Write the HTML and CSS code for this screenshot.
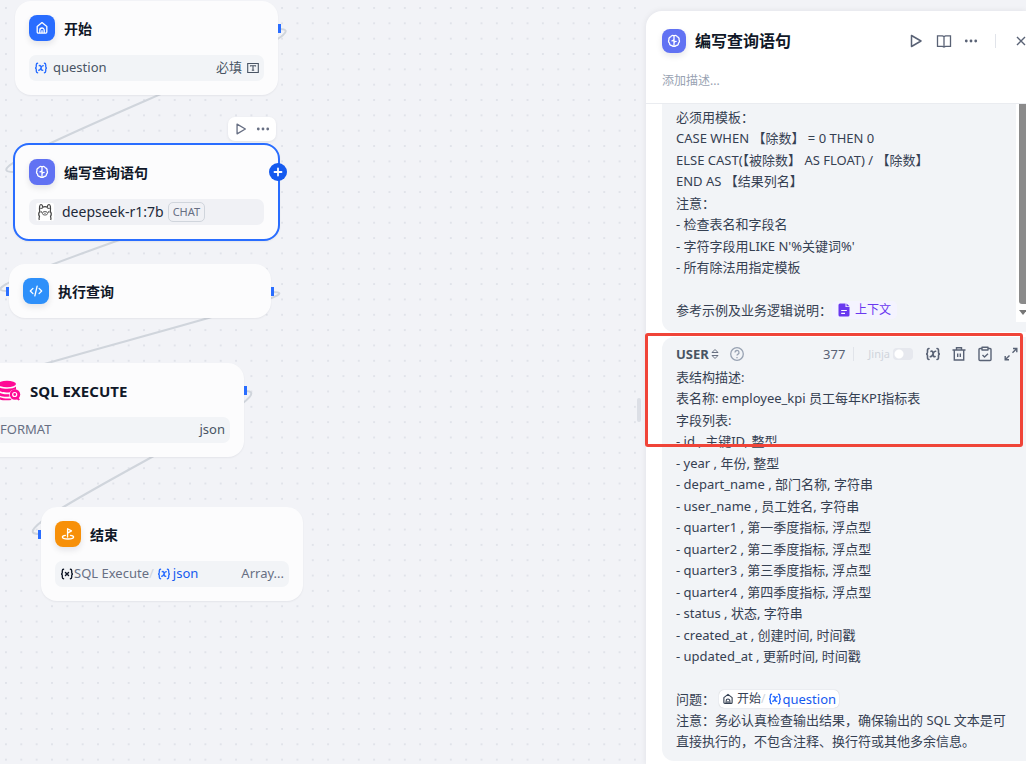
FILE: index.html
```html
<!DOCTYPE html>
<html lang="zh-CN">
<head>
    <meta charset="UTF-8">
    <meta name="viewport" content="width=device-width, initial-scale=1.0">
    <title>Workflow</title>
    <link rel="stylesheet" href="styles.css">
</head>
<body>
    <!-- shared icons -->
    <svg class="sprite" aria-hidden="true">
        <symbol id="i-home" viewBox="0 0 16 16"><path d="M2.500 6.200 8 1.800l5.500 4.400V12.500a1.300 1.300 0 0 1-1.300 1.300H3.800a1.300 1.300 0 0 1-1.300-1.300zM5.500 13.500v-3a2.500 2.500 0 0 1 5 0v3M8 10.500v3" fill="none" stroke="currentColor" stroke-width="1.500" stroke-linejoin="round"/></symbol>
        <symbol id="i-llm" viewBox="0 0 16 16"><path d="M8 1.800v12.400M8 2.200C6.600 1.200 4.600 1.700 4.200 3.300 2.500 3.700 1.700 5.400 2.300 6.800 1.300 8 1.700 9.800 2.900 10.500c0 1.700 1.300 2.700 2.600 2.600.6 1 1.800 1.200 2.500.6.700.6 1.900.4 2.500-.6 1.300.1 2.600-.9 2.600-2.600 1.200-.7 1.600-2.500.6-3.700.6-1.400-.2-3.100-1.900-3.500C11.400 1.700 9.400 1.200 8 2.200M5.600 7.800c1.400 0 2.400-1 2.400-2M10.400 8.500C9 8.500 8 9.400 8 10.500" fill="none" stroke="currentColor" stroke-width="1.500" stroke-linecap="round" stroke-linejoin="round"/></symbol>
        <symbol id="i-code" viewBox="0 0 16 16"><path d="M4.500 5 1.500 8l3 3M11.500 5l3 3-3 3M9.300 2.500 6.700 13.500" fill="none" stroke="currentColor" stroke-width="1.500" stroke-linecap="round" stroke-linejoin="round"/></symbol>
        <symbol id="i-end" viewBox="0 0 16 16"><path d="M7.500 11.500V2l4.500 2.500-4.500 2.500M5 9.500c-2 .3-3.400 1-3.400 1.900 0 1.300 2.800 2.300 6.400 2.300s6.400-1 6.400-2.300c0-.9-1.400-1.600-3.600-1.900" fill="none" stroke="currentColor" stroke-width="1.500" stroke-linecap="round" stroke-linejoin="round"/></symbol>
        <symbol id="i-var" viewBox="0 0 16 14"><path d="M4 1.500C2.500 1.500 2.500 2.300 2.500 3.500v1.700C2.500 6.300 2 7 1 7c1 0 1.500.7 1.500 1.800v1.700c0 1.200 0 2 1.500 2M12 1.500c1.500 0 1.500.8 1.500 2v1.700C13.500 6.300 14 7 15 7c-1 0-1.500.7-1.500 1.800v1.700c0 1.200 0 2-1.500 2M6 4.300c1.600-.6 1.800.8 2.100 2.700.3 1.900.5 3.200 2 2.600M10.600 4.300C9 4 8.500 5.700 8 7 7.400 8.500 7 10 5.300 9.600" fill="none" stroke="currentColor" stroke-width="1.600" stroke-linecap="round"/></symbol>
        <symbol id="i-env" viewBox="0 0 16 14"><path d="M4 1.500C2.500 1.500 2.500 2.300 2.500 3.500v1.700C2.500 6.300 2 7 1 7c1 0 1.500.7 1.500 1.800v1.700c0 1.200 0 2 1.500 2M12 1.500c1.500 0 1.500.8 1.500 2v1.700C13.500 6.300 14 7 15 7c-1 0-1.500.7-1.500 1.800v1.700c0 1.200 0 2-1.500 2M6.200 5.200l3.600 3.600M9.800 5.200 6.200 8.800" fill="none" stroke="currentColor" stroke-width="1.600" stroke-linecap="round"/></symbol>
        <symbol id="i-play" viewBox="0 0 16 16"><path d="M3.500 2.500v11L13 8z" fill="none" stroke="currentColor" stroke-width="1.500" stroke-linejoin="round"/></symbol>
        <symbol id="i-more" viewBox="0 0 16 16"><circle cx="2.600" cy="8" r="1.600"/><circle cx="8" cy="8" r="1.600"/><circle cx="13.400" cy="8" r="1.600"/></symbol>
    </svg>

    <div class="app">
        <main class="canvas">
            <svg class="edges" aria-hidden="true">
                <defs>
                    <pattern id="dots" x="-1.700" y="0.300" width="15.340" height="15.340" patternUnits="userSpaceOnUse">
                        <circle cx="7.670" cy="7.670" r="1" fill="#dcdfe6"/>
                    </pattern>
                </defs>
                <rect width="100%" height="100%" fill="url(#dots)"/>
                <g fill="none" stroke="#d0d5dc" stroke-width="2">
                    <path d="M279 29C341 29-49 172 13 172"/>
                    <path d="M279 172C341 172-55 291 7 291"/>
                    <path d="M273 292C335 292-82 390-20 390"/>
                    <path d="M245 391C299 391-15 534 39 534"/>
                </g>
            </svg>

            <section class="node node-start">
                <header class="node-head">
                    <span class="badge blue"><svg><use href="#i-home"/></svg></span>
                    <h2>开始</h2>
                </header>
                <div class="field">
                    <svg class="var-icon"><use href="#i-var"/></svg>
                    <span class="field-name">question</span>
                    <span>必填</span>
                    <svg class="type-icon" viewBox="0 0 12 12"><path d="M.7 1.500h10.600v9H.7zM3.500 4.600V3.800h5v.8M6 3.800v4.400M4.800 8.200h2.400" fill="none" stroke="currentColor" stroke-width="1.100"/></svg>
                </div>
                <i class="handle right"></i>
            </section>

            <section class="node node-llm selected">
                <header class="node-head">
                    <span class="badge indigo"><svg><use href="#i-llm"/></svg></span>
                    <h2>编写查询语句</h2>
                </header>
                <div class="field model">
                    <svg class="llama" viewBox="0 0 18 18"><rect width="18" height="18" rx="2" fill="#fff"/><path d="M3.300 17c-.5-1.300-.3-2.400.2-3.400-1-1.700-.9-3.900.2-5.300C3.200 5 3.500 1.500 4.900 1.500c1 0 1.700 1.500 1.900 2.800 1.300-.7 3.100-.7 4.400 0 .2-1.300.9-2.800 1.900-2.800 1.400 0 1.700 3.500 1.200 6.800 1.100 1.400 1.200 3.600.2 5.300.5 1 .7 2.100.2 3.400" fill="none" stroke="#444" stroke-width="1.200"/><path d="M4.200 5.300h2.400M11.400 5.300h2.400" stroke="#444"/><ellipse cx="9" cy="10.300" rx="2.600" ry="1.800" fill="none" stroke="#555" stroke-width=".9"/><circle cx="5.200" cy="9" r=".8" fill="#333"/><circle cx="12.800" cy="9" r=".8" fill="#333"/><path d="M9 9.800v1" stroke="#333"/></svg>
                    <span>deepseek-r1:7b</span>
                    <span class="tag">CHAT</span>
                </div>
                <button class="add" aria-label="添加节点"><svg viewBox="0 0 10 10"><path d="M5 1.500v7M1.500 5h7" stroke="#fff" stroke-width="1.800" stroke-linecap="round"/></svg></button>
            </section>

            <div class="node-tools">
                <button aria-label="运行"><svg><use href="#i-play"/></svg></button>
                <button aria-label="更多"><svg><use href="#i-more"/></svg></button>
            </div>

            <section class="node node-code">
                <header class="node-head">
                    <span class="badge sky"><svg><use href="#i-code"/></svg></span>
                    <h2>执行查询</h2>
                </header>
                <i class="handle left"></i>
                <i class="handle right"></i>
            </section>

            <section class="node node-sql">
                <header class="node-head">
                    <span class="badge"><svg class="db-icon" viewBox="0 0 26 26"><g fill="#ff0a95"><ellipse cx="12" cy="7" rx="9" ry="3.300"/><path d="M3 9.500c3 3 15 3 18 0v3.200c-2-.6-5 0-6 2.600-5 .7-10-.2-12-2.300zM3 14.800c2.500 2.200 7 2.800 11 2.400l.7 2.300C9 20.300 4.500 19 3 17.300zM3 19.200c3 2 8 2.800 12.500 2.200l1 1.500C11 24 4 23 3 21z"/><circle cx="20" cy="17.500" r="5.200"/><path d="m22.500 20 2.500 2.500-1.500 1-2.500-2z"/></g><circle cx="19.700" cy="17.500" r="2" fill="none" stroke="#fff" stroke-width="1.200"/></svg></span>
                    <h2>SQL EXECUTE</h2>
                </header>
                <div class="field">
                    <span class="field-name muted">FORMAT</span>
                    <span>json</span>
                </div>
                <i class="handle right"></i>
            </section>

            <section class="node node-end">
                <header class="node-head">
                    <span class="badge orange"><svg><use href="#i-end"/></svg></span>
                    <h2>结束</h2>
                </header>
                <div class="field output">
                    <svg class="env-icon"><use href="#i-env"/></svg>
                    <span class="muted">SQL Execute</span>
                    <span class="slash">/</span>
                    <svg class="var-icon"><use href="#i-var"/></svg>
                    <span class="var-name">json</span>
                    <span class="field-type">Array...</span>
                </div>
                <i class="handle left"></i>
            </section>
            <i class="resizer"></i>
        </main>

        <aside class="panel">
            <header class="panel-head">
                <div class="panel-title">
                    <span class="badge small indigo"><svg><use href="#i-llm"/></svg></span>
                    <h1>编写查询语句</h1>
                    <div class="panel-actions">
                        <button aria-label="运行"><svg><use href="#i-play"/></svg></button>
                        <button aria-label="文档"><svg viewBox="0 0 16 16"><path d="M1.500 2.800h5L8 3.500l1.500-.7h5v10.500h-5L8 14l-1.500-.7h-5zM8 3.500V14" fill="none" stroke="currentColor" stroke-width="1.300"/></svg></button>
                        <button aria-label="更多"><svg class="more"><use href="#i-more"/></svg></button>
                        <i class="divider"></i>
                        <button aria-label="关闭"><svg viewBox="0 0 16 16"><path d="m4 4 8 8M12 4l-8 8" stroke="currentColor" stroke-width="1.400"/></svg></button>
                    </div>
                </div>
                <input class="description" type="text" placeholder="添加描述..." aria-label="添加描述">
            </header>

            <div class="prompts">
                <section class="prompt system">
                    <div class="prompt-text">
                        <p>必须用模板：</p>
                        <p>CASE WHEN 【除数】 = 0 THEN 0</p>
                        <p>ELSE CAST(【被除数】 AS FLOAT) / 【除数】</p>
                        <p>END AS 【结果列名】</p>
                        <p>注意：</p>
                        <p>- 检查表名和字段名</p>
                        <p>- 字符字段用LIKE N'%关键词%'</p>
                        <p>- 所有除法用指定模板</p>
                        <p><br></p>
                        <p>参考示例及业务逻辑说明：<span class="chip context"><svg viewBox="0 0 12 14"><path d="M2 .5h5.500v3.500H11.500V12a1.500 1.500 0 0 1-1.500 1.500H2A1.500 1.500 0 0 1 .5 12V2A1.500 1.500 0 0 1 2 .5zM8.500.5l3 2.700h-3z" fill="currentColor"/><path d="M3.200 7.500h5.600M3.200 10.300h3.800" stroke="#fff" stroke-width="1.200"/></svg>上下文</span></p>
                    </div>
                    <div class="scrollbar"><i></i><svg viewBox="0 0 8 5"><path d="M0 0h8L4 5z" fill="#777"/></svg></div>
                </section>

                <section class="prompt">
                    <header class="prompt-head">
                        <label class="role">
                            <select aria-label="角色"><option>USER</option></select>
                            <svg viewBox="0 0 8 12"><path d="M1 4.500 4 1.500l3 3zM1 7.500l3 3 3-3z" fill="none" stroke="currentColor" stroke-width=".9"/></svg>
                        </label>
                        <svg class="help" viewBox="0 0 16 16"><path d="M6 6.500a2 2 0 1 1 2.800 1.800c-.6.300-.8.600-.8 1.200M8 11v1.300" fill="none" stroke="currentColor" stroke-width="1.300"/><circle cx="8" cy="8" r="6.300" fill="none" stroke="currentColor" stroke-width="1.300"/></svg>
                        <span class="count">377</span>
                        <i class="divider"></i>
                        <label class="jinja">Jinja<input type="checkbox"></label>
                        <button aria-label="插入变量"><svg><use href="#i-var"/></svg></button>
                        <button aria-label="删除"><svg viewBox="0 0 16 16"><path d="M1.500 4h13M3.300 4v10h9.400V4M5.500 4V1.800h5V4M6.700 7.500v3.500M9.300 7.500v3.500" fill="none" stroke="currentColor" stroke-width="1.400"/></svg></button>
                        <button aria-label="复制"><svg viewBox="0 0 16 16"><path d="M5 2.500H3a1 1 0 0 0-1 1v10a1 1 0 0 0 1 1h10a1 1 0 0 0 1-1v-10a1 1 0 0 0-1-1h-2M5 1.200h6v2.800H5zM5.500 9l2 2L11 7.800" fill="none" stroke="currentColor" stroke-width="1.400" stroke-linejoin="round"/></svg></button>
                        <button aria-label="展开"><svg viewBox="0 0 16 16"><path d="M10 2.500h3.800v3.800M13.800 2.500 9.500 6.700M6 13.800H2.200V10M2.200 13.800l4.300-4.300" fill="none" stroke="currentColor" stroke-width="1.400"/></svg></button>
                    </header>
                    <div class="prompt-text">
                        <p>表结构描述:</p>
                        <p>表名称: employee_kpi 员工每年KPI指标表</p>
                        <p>字段列表:</p>
                        <p>- id , 主键ID, 整型</p>
                        <p>- year , 年份, 整型</p>
                        <p>- depart_name , 部门名称, 字符串</p>
                        <p>- user_name , 员工姓名, 字符串</p>
                        <p>- quarter1 , 第一季度指标, 浮点型</p>
                        <p>- quarter2 , 第二季度指标, 浮点型</p>
                        <p>- quarter3 , 第三季度指标, 浮点型</p>
                        <p>- quarter4 , 第四季度指标, 浮点型</p>
                        <p>- status , 状态, 字符串</p>
                        <p>- created_at , 创建时间, 时间戳</p>
                        <p>- updated_at , 更新时间, 时间戳</p>
                        <p><br></p>
                        <p>问题：<span class="chip variable"><svg class="home"><use href="#i-home"/></svg>开始<span class="slash">/</span><svg class="var-icon"><use href="#i-var"/></svg><span class="var-name">question</span></span></p>
                        <p>注意：务必认真检查输出结果，确保输出的 SQL 文本是可直接执行的，不包含注释、换行符或其他多余信息。</p>
                    </div>
                    <div class="highlight"></div>
                </section>
            </div>
        </aside>
    </div>
</body>
</html>
```
FILE: styles.css
```css
* {
    margin: 0;
    padding: 0;
    box-sizing: border-box;
}

body {
    background-color: #f2f3f7;
    color: #354052;
    font-family: "Noto Sans", "Noto Sans CJK SC", sans-serif;
    font-size: 13px;
    overflow: hidden;
}

button, input, select {
    font: inherit;
    color: inherit;
    border: none;
    background: none;
}

button {
    display: flex;
    align-items: center;
    justify-content: center;
    cursor: pointer;
}

svg {
    flex: none;
    fill: currentColor;
}

.sprite {
    position: absolute;
    width: 0;
    height: 0;
}

.app {
    display: flex;
    height: 100vh;
}

/* canvas */
.canvas {
    position: relative;
    flex: 1;
}

.edges {
    position: absolute;
    width: 100%;
    height: 100%;
}

.node {
    position: absolute;
    width: 263px;
    padding: 14px;
    border-radius: 16px;
    background-color: #fcfcfd;
    box-shadow: 0 1px 2px rgba(16, 24, 40, 0.06);
}

.node-start { left: 15px; top: 1px; }
.node-llm { left: 13px; top: 143px; }
.node-code { left: 9px; top: 264px; }
.node-sql { left: -19px; top: 363px; }
.node-end { left: 41px; top: 507px; }

.node-code, .node-end {
    width: 262px;
}

.selected {
    width: 267px;
    border: 2px solid #296dff;
}

.node-head {
    display: flex;
    align-items: center;
    gap: 9px;
    height: 26px;
}

.node-head h2 {
    padding-top: 1px;
    color: #101828;
    font-size: 14px;
    line-height: 20px;
}

.node-sql h2 {
    font-size: 15px;
}

.badge {
    display: flex;
    align-items: center;
    justify-content: center;
    width: 26px;
    height: 26px;
    border-radius: 8px;
    color: white;
}

.badge svg {
    width: 14px;
    height: 14px;
}

.badge .db-icon {
    width: 26px;
    height: 26px;
}

.small {
    width: 24px;
    height: 24px;
}

.blue { background-color: #296dff; }
.indigo { background-color: #6172f3; }
.sky { background-color: #2e90fa; }
.orange { background-color: #f79009; }

.blue, .indigo, .sky, .orange {
    box-shadow: 0 3px 6px rgba(16, 24, 40, 0.1);
}

.field {
    display: flex;
    align-items: center;
    height: 26px;
    margin-top: 14px;
    padding: 0 5px;
    gap: 5px;
    border-radius: 7px;
    background-color: #f2f4f7;
    color: #495464;
    line-height: 18px;
}

.field span {
    height: 20px;
}

.field-name {
    flex: 1;
}

.muted {
    color: #676f83;
}

.field .type-icon {
    width: 12px;
    height: 12px;
}

.var-icon, .env-icon {
    width: 14px;
    height: 12px;
    color: #296dff;
}

.env-icon {
    color: #101828;
}

.model {
    gap: 4px;
    color: #1d2939;
    font-size: 14px;
    line-height: 20px;
    background-color: #f0f1f5;
}

.llama {
    width: 18px;
    height: 18px;
    margin: 0 4px 0 2px;
}

.model .tag {
    padding: 0 4px;
    border: 1px solid #d0d5dc;
    border-radius: 5px;
    color: #676f83;
    font-size: 11px;
    line-height: 18px;
}

.output {
    gap: 0;
}

.slash {
    color: #d0d5dc;
    margin-right: 3px;
}

.var-name {
    margin-left: 2px;
    color: #155aef;
}

.field-type {
    margin-left: auto;
    color: #676f83;
}

.handle {
    position: absolute;
    top: 23px;
    width: 3px;
    height: 9px;
    background-color: #296dff;
}

.handle.left { left: -3px; }
.handle.right { right: -3px; }

.add {
    position: absolute;
    top: 18px;
    right: -9px;
    width: 18px;
    height: 18px;
    border-radius: 50%;
    background-color: #155aef;
}

.add svg {
    width: 10px;
    height: 10px;
}

.node-tools {
    position: absolute;
    left: 228px;
    top: 117px;
    display: flex;
    align-items: center;
    gap: 8px;
    padding: 5px 6px;
    border-radius: 7px;
    background-color: white;
    color: #676f83;
    box-shadow: 0 1px 3px rgba(16, 24, 40, 0.08);
}

.node-tools svg {
    width: 14px;
    height: 14px;
}

.resizer {
    position: absolute;
    top: 398px;
    right: 5px;
    width: 4px;
    height: 24px;
    border-radius: 2px;
    background-color: #dcdfe6;
}

/* side panel */
.panel {
    flex: 0 0 380px;
    margin-top: 11px;
    border-top-left-radius: 16px;
    background-color: white;
    box-shadow: 0 0 6px rgba(16, 24, 40, 0.08);
}

.panel-head {
    padding: 18px 0 13px 16px;
    border-bottom: 1px solid #eaecf0;
}

.panel-title {
    display: flex;
    align-items: center;
    gap: 9px;
}

.panel-title h1 {
    color: #101828;
    font-size: 16px;
    line-height: 24px;
}

.panel-actions {
    display: flex;
    align-items: center;
    gap: 12px;
    margin-left: auto;
    margin-right: -3px;
    color: #596275;
}

.panel-actions svg {
    width: 16px;
    height: 16px;
}

.panel-actions .more {
    width: 14px;
}

.divider {
    width: 1px;
    height: 14px;
    background-color: #e1e4ea;
}

.panel-actions .divider {
    margin: 0 5px;
}

.description {
    display: block;
    width: 100%;
    height: 20px;
    margin-top: 17px;
    font-size: 12px;
}

.description::placeholder {
    color: #98a2b2;
}

.prompts {
    display: flex;
    flex-direction: column;
    gap: 5px;
    padding-left: 16px;
}

.prompt {
    position: relative;
    padding: 0 14px 9px;
    border-radius: 12px 0 0 12px;
    background-color: #f2f4f7;
}

.system {
    padding-top: 2px;
    padding-bottom: 11px;
    border-top-left-radius: 0;
}

.prompt-text p {
    line-height: 21px;
}

.prompt-text p:nth-child(odd) {
    line-height: 22px;
}

.prompt-text p:last-child {
    line-height: 21px;
}

.scrollbar {
    position: absolute;
    top: 0;
    right: 0;
    width: 10px;
    height: 218px;
    padding-left: 3px;
    background-color: white;
}

.scrollbar i {
    display: block;
    height: 200px;
    border-radius: 0 0 0 3px;
    background-color: #8b8b8b;
}

.scrollbar svg {
    display: block;
    width: 8px;
    height: 5px;
    margin-top: 6px;
}

.chip {
    display: inline-flex;
    align-items: center;
    height: 18px;
    line-height: 18px;
    border-radius: 5px;
    vertical-align: top;
    margin-top: 1px;
}

.context {
    gap: 5px;
    padding: 0 6px;
    background-color: #f4f3ff;
    color: #6938ef;
    font-size: 12px;
}

.context svg {
    width: 12px;
    height: 14px;
}

.variable {
    margin-left: 4px;
    padding: 0 3px;
    background-color: white;
    box-shadow: 0 0 1px rgba(16, 24, 40, 0.3);
    font-size: 12px;
}

.variable .home {
    width: 12px;
    height: 12px;
    margin-right: 3px;
}

.variable .var-name {
    margin-left: 1px;
    font-size: 13px;
}

.variable .slash {
    margin-right: 2px;
}

.prompt-head {
    display: flex;
    align-items: center;
    height: 29px;
    padding-top: 4px;
    margin-right: -7px;
    gap: 10px;
    color: #596275;
}

.role {
    display: flex;
    align-items: center;
    gap: 2px;
}

.role select {
    appearance: none;
    color: #495464;
    font-weight: bold;
}

.role svg {
    width: 8px;
    height: 12px;
}

.help {
    width: 16px;
    height: 16px;
    color: #98a2b2;
}

.count {
    margin-left: auto;
}

.prompt-head .divider {
    margin-left: -2px;
}

.jinja {
    display: flex;
    align-items: center;
    gap: 3px;
    margin-left: 4px;
    margin-right: 2px;
    color: #d0d5dc;
    font-size: 11px;
}

.jinja input {
    appearance: none;
    width: 20px;
    height: 12px;
    border-radius: 4px;
    background: radial-gradient(circle at 6px 6px, white 4px, transparent 5px) #e6e8ee;
}

.prompt-head button svg {
    width: 16px;
    height: 16px;
}

/* red frame over the user prompt */
.highlight {
    position: absolute;
    top: -4px;
    left: -17px;
    right: 3px;
    height: 114px;
    border: 3px solid #f04438;
    border-radius: 3px;
}
```
